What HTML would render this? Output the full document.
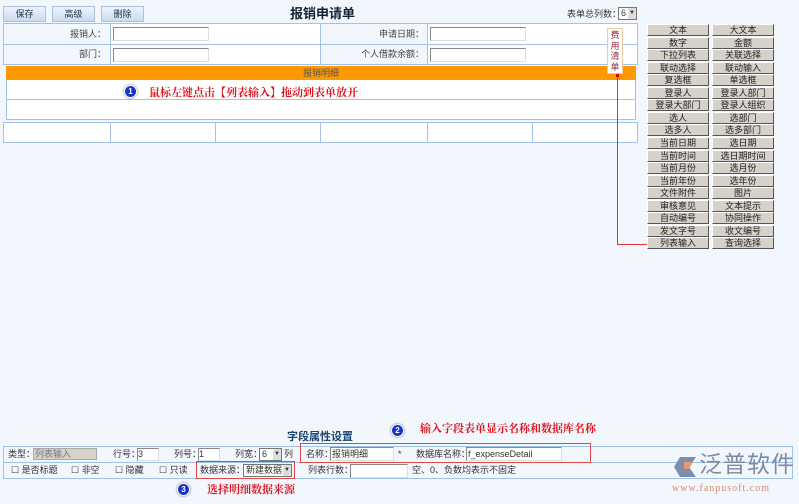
<!DOCTYPE html>
<html><head><meta charset="utf-8"><style>
*{margin:0;padding:0;box-sizing:border-box}
body{width:799px;height:504px;background:#f2f6fd;font-family:"Liberation Sans","Noto Sans CJK SC",sans-serif;font-size:9px;color:#333;position:relative;overflow:hidden;line-height:12px}
.a{position:absolute}
.btn{position:absolute;top:6px;height:16px;width:43px;background:linear-gradient(#eef4fc,#c9dbf2);border:1px solid #a9c2e4;text-align:center;line-height:14px;font-size:9px;color:#234}
.bl{position:absolute;border:1px solid #9fc3ea}
.inp{position:absolute;background:#fff;border:1px solid #888;border-right-color:#ddd;border-bottom-color:#ddd;height:14px}
.lb{position:absolute;text-align:right;font-size:9px;color:#444}
.g{position:absolute;width:62px;height:12px;background:#d6d2ca;border:1px solid #fff;border-right-color:#555;border-bottom-color:#555;text-align:center;line-height:10px;font-size:9px;color:#222}
.red{color:#e0141e;font-weight:bold;font-size:11px;font-family:"Noto Serif CJK SC","Liberation Serif",serif;line-height:14px}
.num{position:absolute;width:13px;height:13px;border-radius:50%;background:#1734c6;border:1px solid #fff;box-shadow:0 0 2px #666;color:#fff;font-size:8px;font-weight:bold;text-align:center;line-height:11px}
</style></head><body>
<div class="btn" style="left:3px">保存</div>
<div class="btn" style="left:52px">高级</div>
<div class="btn" style="left:101px">删除</div>
<div class="a" style="left:290px;top:5px;font-size:13px;font-weight:bold;color:#123;line-height:17px">报销申请单</div>
<div class="a" style="left:567px;top:8px">表单总列数：</div>
<div class="a" style="left:618px;top:7px;width:19px;height:13px;background:#fff;border:1px solid #777;font-size:9px;padding-left:2px;line-height:11px">6<span style="position:absolute;right:0;top:0;width:8px;height:11px;background:#ddd;font-size:6px;text-align:center">▼</span></div>

<div class="bl" style="left:3px;top:23px;width:635px;height:120px;background:#fff"></div>
<div class="a" style="left:4px;top:24px;width:106px;height:40px;background:#f2f6fd"></div>
<div class="a" style="left:320px;top:24px;width:107px;height:40px;background:#f2f6fd"></div>
<div class="a" style="left:3px;top:44px;width:635px;height:1px;background:#9fc3ea"></div>
<div class="a" style="left:3px;top:64px;width:635px;height:1px;background:#9fc3ea"></div>
<div class="a" style="left:110px;top:23px;width:1px;height:42px;background:#9fc3ea"></div>
<div class="a" style="left:320px;top:23px;width:1px;height:42px;background:#9fc3ea"></div>
<div class="a" style="left:427px;top:23px;width:1px;height:42px;background:#9fc3ea"></div>
<div class="lb" style="left:4px;top:28px;width:102px">报销人：</div>
<div class="lb" style="left:4px;top:48px;width:102px">部门：</div>
<div class="lb" style="left:320px;top:28px;width:104px">申请日期：</div>
<div class="lb" style="left:320px;top:48px;width:104px">个人借款余额：</div>
<div class="inp" style="left:113px;top:27px;width:96px"></div>
<div class="inp" style="left:113px;top:48px;width:96px"></div>
<div class="inp" style="left:430px;top:27px;width:96px"></div>
<div class="inp" style="left:430px;top:48px;width:96px"></div>
<div class="a" style="left:3px;top:65px;width:635px;height:57px;background:#f2f6fd"></div>
<div class="bl" style="left:6px;top:66px;width:630px;height:54px;background:#fff"></div>
<div class="a" style="left:6px;top:66px;width:630px;height:14px;background:#f90;text-align:center;line-height:14px;color:#555;font-size:9px">报销明细</div>
<div class="a" style="left:6px;top:99px;width:630px;height:1px;background:#9fc3ea"></div>
<div class="a" style="left:3px;top:122px;width:635px;height:1px;background:#9fc3ea"></div>
<div class="a" style="left:110px;top:122px;width:1px;height:20px;background:#9fc3ea"></div>
<div class="a" style="left:215px;top:122px;width:1px;height:20px;background:#9fc3ea"></div>
<div class="a" style="left:320px;top:122px;width:1px;height:20px;background:#9fc3ea"></div>
<div class="a" style="left:427px;top:122px;width:1px;height:20px;background:#9fc3ea"></div>
<div class="a" style="left:532px;top:122px;width:1px;height:20px;background:#9fc3ea"></div>
<div class="num" style="left:124px;top:85px">1</div>
<div class="a red" style="left:149px;top:85px">鼠标左键点击【列表输入】拖动到表单放开</div>

<div class="a" style="left:607px;top:28px;width:16px;height:46px;background:#fff;border:1px solid #f0c9a0;color:#8a2a4a;font-size:9px;line-height:10.5px;text-align:center;padding-top:1px">费<br>用<br>清<br>单</div>
<div class="a" style="left:617px;top:75px;width:1px;height:170px;background:#d33"></div>
<div class="a" style="left:617px;top:244px;width:36px;height:1px;background:#d33"></div>
<div class="a" style="left:616px;top:74px;width:3px;height:3px;background:#d00"></div>
<div class="a" style="left:651px;top:243px;width:3px;height:3px;background:#d00"></div>

<div id="grid"></div>
<script>
var L=["文本","数字","下拉列表","联动选择","复选框","登录人","登录大部门","选人","选多人","当前日期","当前时间","当前月份","当前年份","文件附件","审核意见","自动编号","发文字号","列表输入"];
var R=["大文本","金额","关联选择","联动输入","单选框","登录人部门","登录人组织","选部门","选多部门","选日期","选日期时间","选月份","选年份","图片","文本提示","协同操作","收文编号","查询选择"];
var h="";for(var i=0;i<18;i++){var t=(24+i*12.55).toFixed(1);h+='<div class="g" style="left:647px;top:'+t+'px">'+L[i]+'</div><div class="g" style="left:712px;top:'+t+'px">'+R[i]+'</div>';}
document.getElementById("grid").innerHTML=h;
</script>

<div class="a" style="left:287px;top:430px;font-size:11px;font-weight:bold;color:#1c4570;line-height:14px">字段属性设置</div>
<div class="num" style="left:391px;top:424px">2</div>
<div class="a red" style="left:420px;top:421px">输入字段表单显示名称和数据库名称</div>
<div class="bl" style="left:3px;top:446px;width:790px;height:33px"></div>
<div class="a" style="left:3px;top:462px;width:790px;height:1px;background:#9fc3ea"></div>
<div class="a" style="left:8px;top:448px">类型：</div>
<div class="a" style="left:33px;top:448px;width:64px;height:12px;background:#d6d2ca;border:1px solid #aaa;color:#777;padding-left:1px;line-height:10px">列表输入</div>
<div class="a" style="left:113px;top:448px">行号：</div>
<div class="inp" style="left:137px;top:448px;width:22px;height:13px;font-size:9px;line-height:11px">3</div>
<div class="a" style="left:174px;top:448px">列号：</div>
<div class="inp" style="left:198px;top:448px;width:22px;height:13px;font-size:9px;line-height:11px">1</div>
<div class="a" style="left:235px;top:448px">列宽：</div>
<div class="a" style="left:259px;top:448px;width:23px;height:13px;background:#fff;border:1px solid #777;padding-left:2px;line-height:11px">6<span style="position:absolute;right:0;top:0;width:8px;height:11px;background:#ddd;font-size:6px;text-align:center">▼</span></div>
<div class="a" style="left:284px;top:448px">列</div>
<div class="a" style="left:306px;top:448px">名称：</div>
<div class="inp" style="left:330px;top:447px;width:64px;height:14px;font-size:9px;padding-left:1px">报销明细</div>
<div class="a" style="left:398px;top:448px">*</div>
<div class="a" style="left:416px;top:448px">数据库名称：</div>
<div class="inp" style="left:466px;top:447px;width:96px;height:14px;font-size:9px;padding-left:1px;font-family:'Liberation Sans'">f_expenseDetail</div>
<div class="a" style="left:300px;top:443px;width:291px;height:20px;border:1px solid #e04848"></div>
<div class="a" style="left:11px;top:464px">☐ 是否标题</div>
<div class="a" style="left:71px;top:464px">☐ 非空</div>
<div class="a" style="left:115px;top:464px">☐ 隐藏</div>
<div class="a" style="left:159px;top:464px">☐ 只读</div>
<div class="a" style="left:200px;top:464px">数据来源：</div>
<div class="a" style="left:243px;top:464px;width:49px;height:13px;background:#fff;border:1px solid #777;padding-left:2px;line-height:11px">新建数据<span style="position:absolute;right:0;top:0;width:8px;height:11px;background:#ddd;font-size:6px;text-align:center">▼</span></div>
<div class="a" style="left:196px;top:461px;width:99px;height:18px;border:1px solid #e04848"></div>
<div class="a" style="left:308px;top:464px">列表行数：</div>
<div class="inp" style="left:350px;top:464px;width:58px;height:14px"></div>
<div class="a" style="left:412px;top:464px">空、0、负数均表示不固定</div>
<div class="num" style="left:177px;top:483px">3</div>
<div class="a red" style="left:207px;top:482px">选择明细数据来源</div>

<svg class="a" style="left:672px;top:456px" width="26" height="22"><path d="M8 1 L24 1 L17 11 L24 21 L8 21 L2 11 Z" fill="#7e8eaa"/><path d="M12 6 L21 6 L17 13 L12 13 Z" fill="#e8967a"/></svg>
<div class="a" style="left:699px;top:450px;font-size:23px;color:#7f8aa3;letter-spacing:1px;line-height:28px">泛普软件</div>
<div class="a" style="left:672px;top:483px;font-size:10px;color:#d48a72;font-family:'Liberation Serif',serif;letter-spacing:1px">www.fanpusoft.com</div>
</body></html>
